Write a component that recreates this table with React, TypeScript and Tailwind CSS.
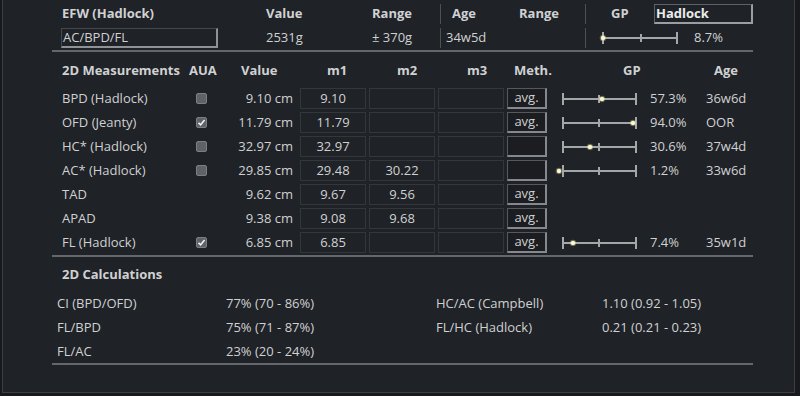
import React from 'react';

interface Measurement {
  name: string;
  aua: boolean | null;
  value: string;
  m1: string;
  m2: string;
  m3: string;
  meth: string;
  gp?: { dot: number; pct: string; age: string };
}

const measurements: Measurement[] = [
  { name: 'BPD (Hadlock)', aua: false, value: '9.10 cm', m1: '9.10', m2: '', m3: '', meth: 'avg.', gp: { dot: 40, pct: '57.3%', age: '36w6d' } },
  { name: 'OFD (Jeanty)', aua: true, value: '11.79 cm', m1: '11.79', m2: '', m3: '', meth: 'avg.', gp: { dot: 71, pct: '94.0%', age: 'OOR' } },
  { name: 'HC* (Hadlock)', aua: false, value: '32.97 cm', m1: '32.97', m2: '', m3: '', meth: '', gp: { dot: 28, pct: '30.6%', age: '37w4d' } },
  { name: 'AC* (Hadlock)', aua: false, value: '29.85 cm', m1: '29.48', m2: '30.22', m3: '', meth: '', gp: { dot: -3, pct: '1.2%', age: '33w6d' } },
  { name: 'TAD', aua: null, value: '9.62 cm', m1: '9.67', m2: '9.56', m3: '', meth: 'avg.' },
  { name: 'APAD', aua: null, value: '9.38 cm', m1: '9.08', m2: '9.68', m3: '', meth: 'avg.' },
  { name: 'FL (Hadlock)', aua: true, value: '6.85 cm', m1: '6.85', m2: '', m3: '', meth: 'avg.', gp: { dot: 11, pct: '7.4%', age: '35w1d' } },
];

const calculations = [
  [['CI (BPD/OFD)', '77% (70 - 86%)'], ['HC/AC (Campbell)', '1.10 (0.92 - 1.05)']],
  [['FL/BPD', '75% (71 - 87%)'], ['FL/HC (Hadlock)', '0.21 (0.21 - 0.23)']],
  [['FL/AC', '23% (20 - 24%)']],
];

// growth percentile bar: end ticks, mid tick, and a marker dot
const GpBar = ({ dot, width = 75, mid = 37 }: { dot: number; width?: number; mid?: number }) => (
  <svg width={width} height={14} className="overflow-visible shrink-0">
    <line x1={1} y1={7} x2={width - 1} y2={7} stroke="#a4a6a8" strokeWidth={2} />
    <line x1={1} y1={1} x2={1} y2={13} stroke="#a4a6a8" strokeWidth={2} />
    <line x1={width - 1} y1={1} x2={width - 1} y2={13} stroke="#a4a6a8" strokeWidth={2} />
    <line x1={mid} y1={3} x2={mid} y2={11} stroke="#a4a6a8" strokeWidth={2} />
    <circle cx={dot} cy={7} r={3.3} fill="#f6f2b8" opacity={0.3} />
    <circle cx={dot} cy={7} r={2.2} fill="#fbf8cc" />
  </svg>
);

const CheckBox = ({ checked }: { checked: boolean }) => (
  <div className="w-[11px] h-[11px] rounded-[2px] bg-[#5f6267] border border-[#7c7f84] flex items-center justify-center">
    {checked && (
      <svg width="9" height="9" viewBox="0 0 9 9">
        <path d="M1.5 4.8 L3.6 6.8 L7.6 2" stroke="#f2f2f2" strokeWidth="1.6" fill="none" />
      </svg>
    )}
  </div>
);

const Cell = ({ children }: { children?: React.ReactNode }) => (
  <div className="w-[66px] h-[21px] border border-[#33363b] flex items-center justify-center">{children}</div>
);

const MethButton = ({ label }: { label: string }) => (
  <div className="w-[40px] h-[21px] border border-[#55585c] border-r-2 border-b-2 border-r-[#85888c] border-b-[#85888c] bg-[#1b1d21] flex items-center justify-center">
    {label}
  </div>
);

export default function App() {
  return (
    <div
      className="w-[800px] h-[396px] bg-[#17191c] text-[13px] text-[#d0d1d3] overflow-hidden"
      style={{ fontFamily: '"Open Sans", "Noto Sans", sans-serif' }}
    >
      <div className="ml-[2px] mr-[5px] h-[393px] bg-[#1f2226] border-l border-r border-b border-[#3b3e43]">
        <div className="ml-[49px] w-[701px]">
          {/* EFW */}
          <div className="pt-[4px] pl-[10px] grid grid-cols-[204px_106px_68px_2px_77px_66px_2px_166px] gap-y-[4px] items-center">
            <div className="h-[20px] flex items-center font-bold">EFW (Hadlock)</div>
            <div className="font-bold">Value</div>
            <div className="font-bold">Range</div>
            <div className="h-[20px] bg-[#4d5055] w-[1px]" />
            <div className="pl-[10px] font-bold">Age</div>
            <div className="font-bold">Range</div>
            <div className="h-[20px] bg-[#4d5055] w-[1px]" />
            <div className="flex items-center">
              <span className="w-[67px] pl-[24px] font-bold">GP</span>
              <div className="w-[99px] h-[20px] border border-[#5e6165] border-r-2 border-b-2 border-r-[#9c9fa2] border-b-[#9c9fa2] pl-[1px] flex items-center font-bold text-[#ececec]">
                Hadlock
              </div>
            </div>

            <div className="h-[20px] -ml-[1px] w-[157px] border border-[#45484c] border-r-2 border-b-2 border-r-[#8f9296] border-b-[#8f9296] pl-[1px] flex items-center">
              AC/BPD/FL
            </div>
            <div>2531g</div>
            <div>± 370g</div>
            <div className="h-[20px] bg-[#4d5055] w-[1px]" />
            <div className="pl-[4px]">34w5d</div>
            <div />
            <div className="h-[20px] bg-[#4d5055] w-[1px]" />
            <div className="flex items-center pl-[15px]">
              <GpBar dot={1} width={76} mid={39} />
              <span className="ml-[16px]">8.7%</span>
            </div>
          </div>
          <div className="mt-[2px] border-t-2 border-[#64676b]" />

          {/* 2D measurements */}
          <div className="pl-[10px]">
            <div className="mt-[9px] h-[20px] flex items-center font-bold">
              <div className="w-[127px] shrink-0">2D Measurements</div>
              <div className="w-[37px] shrink-0">AUA</div>
              <div className="w-[74px] shrink-0 pl-[15px]">Value</div>
              <div className="w-[69px] shrink-0 pl-[27px]">m1</div>
              <div className="w-[69px] shrink-0 pl-[28px]">m2</div>
              <div className="w-[69px] shrink-0 pl-[29px]">m3</div>
              <div className="w-[116px] shrink-0 pl-[7px]">Meth.</div>
              <div className="w-[91px] shrink-0">GP</div>
              <div>Age</div>
            </div>
            <div className="mt-[7px] flex flex-col gap-[3px]">
              {measurements.map((m) => (
                <div key={m.name} className="h-[21px] flex items-center">
                  <div className="w-[127px] shrink-0">{m.name}</div>
                  <div className="w-[37px] shrink-0 pl-[7px]">{m.aua !== null && <CheckBox checked={m.aua} />}</div>
                  <div className="w-[74px] shrink-0 pr-[7px] text-right">{m.value}</div>
                  <div className="flex gap-[3px] shrink-0">
                    <Cell>{m.m1}</Cell>
                    <Cell>{m.m2}</Cell>
                    <Cell>{m.m3}</Cell>
                    <MethButton label={m.meth} />
                  </div>
                  {m.gp && (
                    <div className="flex items-center pl-[15px]">
                      <GpBar dot={m.gp.dot} width={75} mid={37} />
                      <span className="ml-[13px] w-[56px]">{m.gp.pct}</span>
                      <span>{m.gp.age}</span>
                    </div>
                  )}
                </div>
              ))}
            </div>
          </div>
          <div className="mt-[2px] border-t-2 border-[#64676b]" />

          {/* 2D calculations */}
          <div className="mt-[8px] pl-[10px] h-[20px] flex items-center font-bold">2D Calculations</div>
          <div className="mt-[7px] pl-[5px]">
            {calculations.map((row, i) => (
              <div key={i} className="h-[24px] flex items-center">
                {row.map(([label, val], j) => (
                  <React.Fragment key={label}>
                    <div className={j === 0 ? 'w-[169px] shrink-0' : 'w-[166px] shrink-0'}>{label}</div>
                    <div className={j === 0 ? 'w-[210px] shrink-0' : ''}>{val}</div>
                  </React.Fragment>
                ))}
              </div>
            ))}
          </div>
          <div className="-mt-[1px] border-t-2 border-[#64676b]" />
        </div>
      </div>
    </div>
  );
}
